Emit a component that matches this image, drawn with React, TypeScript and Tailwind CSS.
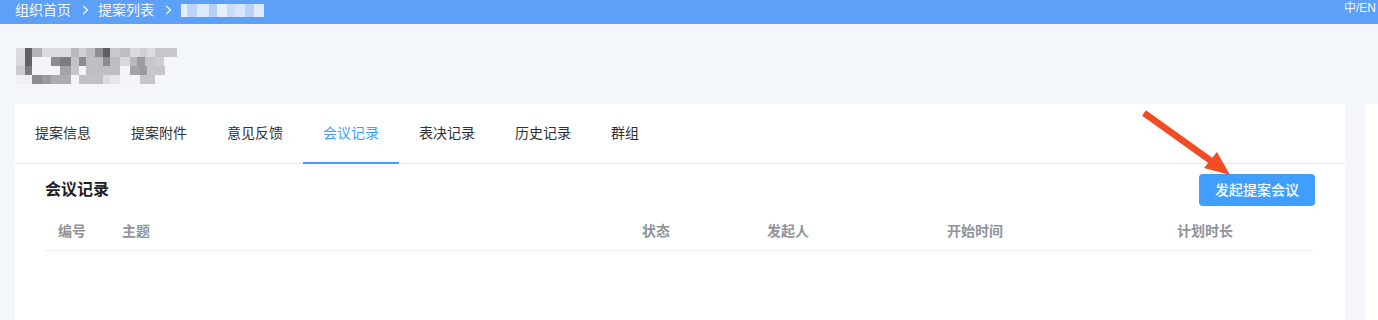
import React from "react";

const FONT = "font-['Liberation_Sans','Noto_Sans_CJK_SC',sans-serif]";

// blurred page title, drawn as a mosaic: [width, colour]
const TITLE_ROWS: [number, string][][] = [
  [[9, "#dcdce0"], [7, "#5f6063"], [10, "#b1b3b5"], [29, "#dadbdf"], [8, "#b9babd"], [7, "#d0d1d4"], [9, "#bdbec1"], [8, "#8e8f92"], [7, "#5f6063"], [10, "#c8c9cc"], [10, "#bdbec1"], [10, "#d8d9dc"], [7, "#cfd0d3"], [8, "#dcdde0"], [22, "#c6c7ca"]],
  [[9, "#d8d9dc"], [7, "#5f6063"], [19, "#f3f5fa"], [9, "#8c8d90"], [11, "#7d7e81"], [8, "#c3c4c7"], [7, "#8b8c8f"], [17, "#bebfc2"], [7, "#8a8b8e"], [10, "#bdbec1"], [10, "#d8d9dc"], [7, "#b8b9bc"], [8, "#9b9c9f"], [10, "#c6c7ca"], [9, "#cdced1"]],
  [[9, "#cbccd0"], [7, "#7b7c7f"], [28, "#f3f5fa"], [11, "#a3a4a7"], [8, "#c5c6c9"], [7, "#f3f5fa"], [17, "#bebfc2"], [7, "#bebfc2"], [10, "#bdbec1"], [10, "#f3f5fa"], [10, "#a3a4a7"], [7, "#9b9c9f"], [18, "#c6c7ca"]],
  [[16, "#eff0f4"], [10, "#8c8d90"], [9, "#9a9b9e"], [20, "#acadb0"], [8, "#f3f5fa"], [7, "#c0c1c4"], [17, "#c0c1c4"], [7, "#dcdde0"], [10, "#e5e6ea"], [20, "#f3f5fa"], [15, "#c5c6c9"]],
];

// blurred breadcrumb tail
const CRUMB_BLOCKS: [number, string][] = [
  [6, "#e4eefe"], [10, "#bcd4fc"], [12, "#dbe8fd"], [8, "#b4cefb"], [10, "#e6effe"], [8, "#c9dcfc"], [10, "#d6e5fd"], [9, "#b8d1fb"], [10, "#dfeafe"],
];

const TABS = ["提案信息", "提案附件", "意见反馈", "会议记录", "表决记录", "历史记录", "群组"];

const COLUMNS: { label: string; width: string }[] = [
  { label: "编号", width: "w-[65px] pl-[13px]" },
  { label: "主题", width: "w-[520px] pl-3" },
  { label: "状态", width: "w-[125px] pl-3" },
  { label: "发起人", width: "w-[180px] pl-3" },
  { label: "开始时间", width: "w-[230px] pl-3" },
  { label: "计划时长", width: "flex-1 pl-3" },
];

function Chevron() {
  return (
    <svg width="7" height="10" viewBox="0 0 7 10" className="ml-[11px] mr-[9px]">
      <path d="M1.2 1 L5.5 5 L1.2 9" fill="none" stroke="#eef4ff" strokeWidth="1.3" />
    </svg>
  );
}

function Arrow() {
  return (
    <svg width="100" height="75" viewBox="0 0 100 75" className="absolute left-[1135px] top-[108px] pointer-events-none">
      <line x1="9" y1="5" x2="79" y2="55" stroke="#f34b24" strokeWidth="6.5" strokeLinecap="butt" />
      <polygon points="95,67 69,60 82,44" fill="#f34b24" />
    </svg>
  );
}

export default function App() {
  return (
    <div className={`relative w-[1378px] h-[320px] overflow-hidden bg-[#f3f6fb] ${FONT}`}>
      {/* top bar */}
      <div className="h-6 bg-[#5da0f8] flex justify-between pl-[15px] pr-[2px]">
        <div className="flex items-center text-[14px] leading-[18px] text-[#f2f6ff] -mt-[4px]">
          <span>组织首页</span>
          <Chevron />
          <span>提案列表</span>
          <Chevron />
          <div className="flex h-[13px]">
            {CRUMB_BLOCKS.map(([w, c], i) => (
              <div key={i} style={{ width: w, background: c }} />
            ))}
          </div>
        </div>
        <span className="text-[12px] leading-[16px] text-[#f2f6ff]">中/EN</span>
      </div>

      {/* blurred title */}
      <div className="h-20 pl-4 pt-6">
        <div className="flex flex-col">
          {TITLE_ROWS.map((row, r) => (
            <div key={r} className="flex h-[9px]">
              {row.map(([w, c], i) => (
                <div key={i} style={{ width: w, background: c }} />
              ))}
            </div>
          ))}
        </div>
      </div>

      <div className="flex gap-5 pl-[15px]">
        {/* main card */}
        <div className="w-[1330px] shrink-0 h-[300px] bg-white">
          <div className="flex h-[60px] border-b border-[#e4e7ed]">
            {TABS.map((t) => {
              const active = t === "会议记录";
              return (
                <div
                  key={t}
                  className={`h-[60px] -mb-px px-5 flex items-center text-[14px] border-b-2 ${
                    active ? "text-[#409eff] border-[#409eff]" : "text-[#303133] border-transparent"
                  }`}
                >
                  {t}
                </div>
              );
            })}
          </div>

          <div className="px-[30px] pt-[10px]">
            <div className="flex items-center justify-between h-8">
              <span className="text-[16px] font-bold text-[#1f2023]">会议记录</span>
              <button className="h-8 px-4 rounded bg-[#409eff] text-white text-[14px] font-medium">
                发起提案会议
              </button>
            </div>

            <div className="mt-[6px] h-[39px] flex items-center border-b border-[#ebeef5] text-[14px] font-bold text-[#909399] mr-[1px]">
              {COLUMNS.map((c) => (
                <div key={c.label} className={c.width}>
                  {c.label}
                </div>
              ))}
            </div>
          </div>
        </div>

        {/* side panel */}
        <div className="w-[200px] shrink-0 h-[300px] bg-white" />
      </div>

      <Arrow />
    </div>
  );
}
